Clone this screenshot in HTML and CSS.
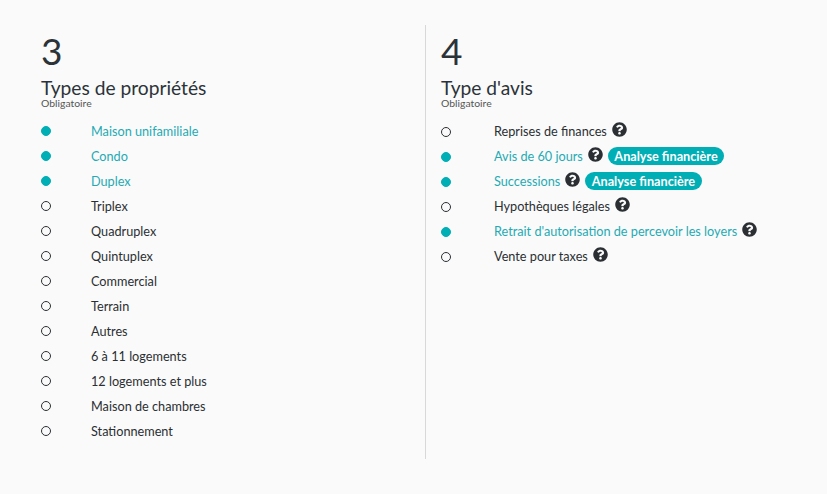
FILE: index.html
```html
<!DOCTYPE html>
<html lang="fr">
<head>
<meta charset="utf-8">
<title>Types</title>
<link rel="stylesheet" href="styles.css">
</head>
<body>
<svg class="defs" width="0" height="0" aria-hidden="true"><symbol id="q" viewBox="0 0 512 512"><path d="M504 256c0 136.997-111.043 248-248 248S8 392.997 8 256C8 119.083 119.043 8 256 8s248 111.083 248 248zM262.655 90c-54.497 0-89.255 22.957-116.549 63.758-3.536 5.286-2.353 12.415 2.715 16.258l34.699 26.31c5.205 3.947 12.621 3.008 16.665-2.122 17.864-22.658 30.113-35.797 57.303-35.797 20.429 0 45.698 13.148 45.698 32.958 0 14.976-12.363 22.667-32.534 33.976C247.128 238.528 216 254.941 216 296v4c0 6.627 5.373 12 12 12h56c6.627 0 12-5.373 12-12v-1.333c0-28.462 83.186-29.647 83.186-106.667 0-58.002-60.165-102-116.531-102zM256 338c-25.365 0-46 20.635-46 46 0 25.364 20.635 46 46 46s46-20.636 46-46c0-25.365-20.635-46-46-46z"/></symbol></svg>
<main class="page">
<section class="col col-left">
  <div class="num">3</div>
  <h2 class="title">Types de propriétés</h2>
  <div class="req">Obligatoire</div>
  <ul class="list">
    <li class="row on"><span class="dot"></span><span class="lbl">Maison unifamiliale</span></li>
    <li class="row on"><span class="dot"></span><span class="lbl">Condo</span></li>
    <li class="row on"><span class="dot"></span><span class="lbl">Duplex</span></li>
    <li class="row"><span class="dot"></span><span class="lbl">Triplex</span></li>
    <li class="row"><span class="dot"></span><span class="lbl">Quadruplex</span></li>
    <li class="row"><span class="dot"></span><span class="lbl">Quintuplex</span></li>
    <li class="row"><span class="dot"></span><span class="lbl">Commercial</span></li>
    <li class="row"><span class="dot"></span><span class="lbl">Terrain</span></li>
    <li class="row"><span class="dot"></span><span class="lbl">Autres</span></li>
    <li class="row"><span class="dot"></span><span class="lbl">6 à 11 logements</span></li>
    <li class="row"><span class="dot"></span><span class="lbl">12 logements et plus</span></li>
    <li class="row"><span class="dot"></span><span class="lbl">Maison de chambres</span></li>
    <li class="row"><span class="dot"></span><span class="lbl">Stationnement</span></li>
  </ul>
</section>
<section class="col col-right">
  <div class="num">4</div>
  <h2 class="title">Type d'avis</h2>
  <div class="req">Obligatoire</div>
  <ul class="list list-right">
    <li class="row"><span class="dot"></span><span class="lbl">Reprises de finances</span><svg class="q"><use href="#q"/></svg></li>
    <li class="row on"><span class="dot"></span><span class="lbl">Avis de 60 jours</span><svg class="q"><use href="#q"/></svg><span class="pill">Analyse financière</span></li>
    <li class="row on"><span class="dot"></span><span class="lbl">Successions</span><svg class="q"><use href="#q"/></svg><span class="pill">Analyse financière</span></li>
    <li class="row"><span class="dot"></span><span class="lbl">Hypothèques légales</span><svg class="q"><use href="#q"/></svg></li>
    <li class="row on"><span class="dot"></span><span class="lbl">Retrait d'autorisation de percevoir les loyers</span><svg class="q"><use href="#q"/></svg></li>
    <li class="row"><span class="dot"></span><span class="lbl">Vente pour taxes</span><svg class="q"><use href="#q"/></svg></li>
  </ul>
</section>
</main>
</body>
</html>
```
FILE: styles.css
```css
* { box-sizing: border-box; }
html, body { margin: 0; height: 100%; }
body {
  background: #fafafa;
  color: #2b2f33;
  font-family: Lato, "Open Sans", sans-serif;
  overflow: hidden;
}
.defs { position: absolute; }
.page { display: flex; padding: 25px 0 0 25px; }
.col { height: 434px; }
.col-left { width: 401px; padding-left: 16px; border-right: 1px solid #d8d8d8; }
.col-right { padding-left: 15px; }
.num { font-size: 37px; line-height: 52px; height: 52px; color: #2b3338; }
.title { margin: 0; font-size: 19.2px; font-weight: 400; line-height: 21px; color: #2b3338; }
.req { font-size: 10.4px; line-height: 10px; height: 10px; color: #555; font-weight: 400; }
.list { list-style: none; margin: 0; padding: 10px 0 0; }
.row { display: flex; align-items: center; height: 25px; font-size: 12.7px; }
.dot { flex: none; width: 10px; height: 10px; border-radius: 50%; border: 1px solid #2b2f33; margin-right: 40px; }
.list-right .dot { margin-right: 43px; position: relative; top: 1px; }
.on .dot { background: #00aeb5; border-color: #00aeb5; }
.on .lbl { color: #1faab4; }
.q { width: 15px; height: 15px; margin-left: 5px; fill: #2b2f33; position: relative; top: -1px; }
.pill {
  margin-left: 5px;
  background: #00aeb5;
  color: #fff;
  font-size: 12.7px;
  font-weight: 700;
  line-height: 18px;
  height: 18px;
  padding: 0 6.5px;
  border-radius: 9px;
}
```
